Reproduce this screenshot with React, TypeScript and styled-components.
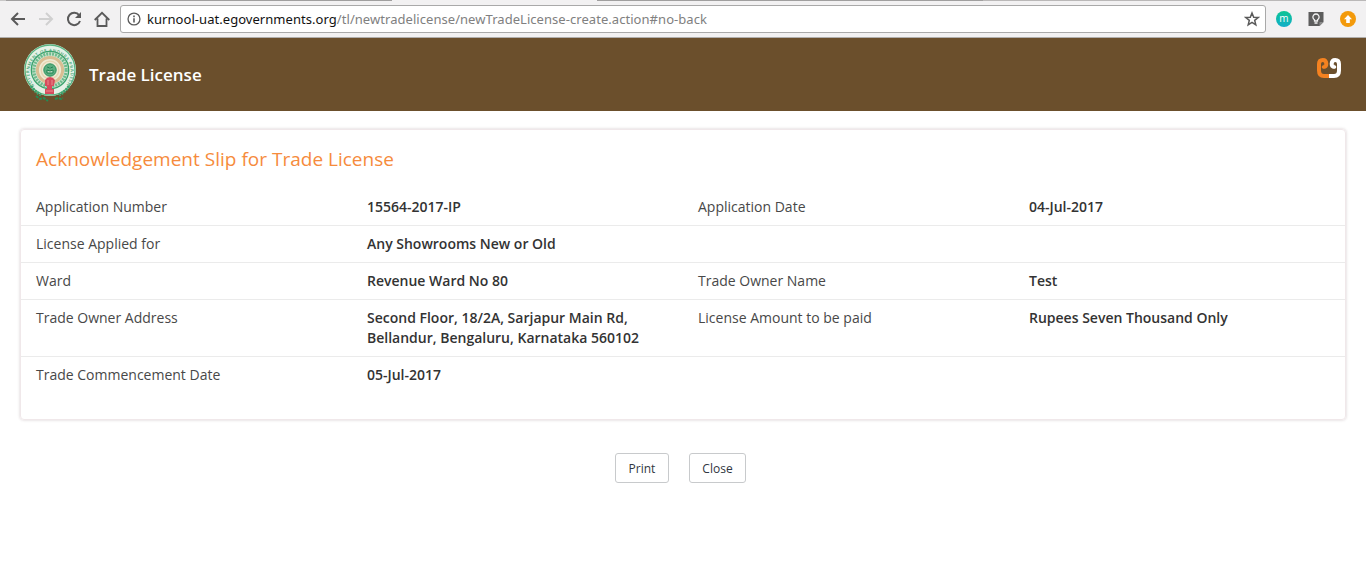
import React from 'react';
import styled, { createGlobalStyle } from 'styled-components';

const GlobalStyle = createGlobalStyle`
  * { box-sizing: border-box; }
  body { margin: 0; background: #fff; font-family: 'Open Sans', sans-serif; font-size: 14px; line-height: 20px; color: #303641; }
`;

const TabEdge = styled.div`
  display: flex;
  height: 1px;
  background: #a09f9f;
`;
const TabPart = styled.span<{ $w: number; $color: string }>`
  width: ${(p) => p.$w}px;
  background: ${(p) => p.$color};
`;
const BrowserBar = styled.div`
  display: flex;
  align-items: center;
  height: 37px;
  padding: 0 10px;
  background: #f2f1f2;
  border-bottom: 1px solid #b0aeac;
`;
const NavIcon = styled.svg<{ $disabled?: boolean }>`
  flex: none;
  width: 16px;
  height: 16px;
  margin-right: 12px;
  fill: none;
  stroke: ${(p) => (p.$disabled ? '#d0d0d0' : '#5a5a5a')};
  stroke-width: 2;
`;
const AddressBox = styled.div`
  display: flex;
  align-items: center;
  width: 1146px;
  height: 28px;
  margin-left: -2px;
  padding: 0 5px 0 6px;
  background: #fff;
  border: 1px solid #a9a9a9;
  border-radius: 3px;
`;
const Url = styled.span`
  flex: 1;
  margin-left: 6px;
  font: 13px/20px 'Noto Sans', sans-serif;
  letter-spacing: 0.05px;
  color: #808080;
  white-space: nowrap;
`;
const Host = styled.span`
  color: #111;
`;
const Extensions = styled.div`
  display: flex;
  align-items: center;
  gap: 16px;
  margin-left: 10px;
`;
const SmallIcon = styled.svg<{ $size?: number }>`
  flex: none;
  display: block;
  width: ${(p) => p.$size ?? 16}px;
  height: ${(p) => p.$size ?? 16}px;
`;

const Header = styled.header`
  display: flex;
  align-items: center;
  height: 73px;
  padding: 0 23px;
  background: #6b4f2c;
`;
const EmblemSvg = styled.svg`
  width: 54px;
  height: 60px;
  margin-top: -3px;
`;
const AppTitle = styled.h1`
  flex: 1;
  margin: 1px 0 0 12px;
  font-size: 17px;
  font-weight: 600;
  line-height: 22px;
  color: #fff;
`;
const BrandSvg = styled.svg`
  width: 26px;
  height: 22px;
  margin: -13px 1px 0 0;
`;

const Card = styled.section`
  height: 291px;
  margin: 18px 20px 0;
  border: 1px solid #f0e8ea;
  border-radius: 4px;
  box-shadow: 0 0 3px rgba(80, 40, 50, 0.24);
`;
const CardTitle = styled.h2`
  margin: 0;
  padding: 15px 15px 16px;
  font-size: 19px;
  font-weight: 400;
  letter-spacing: 0.01px;
  line-height: 28px;
  color: #f68b3c;
`;
const Row = styled.div`
  display: grid;
  grid-template-columns: repeat(4, 1fr);
  border-bottom: 1px solid #ebebeb;
  &:last-child { border-bottom: 0; }
`;
const Label = styled.div`
  padding: 8px 15px;
  color: #484848;
`;
const Value = styled.div`
  padding: 8px 15px;
  font-weight: 600;
  color: #333;
`;
const Actions = styled.div`
  display: flex;
  justify-content: center;
  gap: 20px;
  margin: 33px 5px 0 0;
`;
const Button = styled.button<{ $w: number }>`
  width: ${(p) => p.$w}px;
  height: 30px;
  padding: 2px 0 0;
  font: 12px/18px 'Open Sans', sans-serif;
  color: #303641;
  background: #fff;
  border: 1px solid #c8cacc;
  border-radius: 3px;
`;

const Emblem = () => (
  <EmblemSvg viewBox="0 0 54 60">
    <defs>
      <path id="ring" d="M11.5 43A20.6 20.6 0 1 1 42.5 43" />
    </defs>
    <circle cx="27" cy="27" r="26" fill="#e4f1e6" />
    <circle cx="27" cy="27" r="25" fill="none" stroke="#5bb583" strokeWidth="1.3" />
    <circle cx="27" cy="27" r="18.7" fill="#cfe6d2" stroke="#3ba26d" strokeWidth="1.3" />
    <circle cx="27" cy="27" r="16.2" fill="none" stroke="#6dbb8d" strokeWidth="3.2" strokeDasharray="2 1" />
    <text fontFamily="Open Sans, sans-serif" fontWeight="600" fontSize="4.4" fill="#48a574">
      <textPath href="#ring" textLength="92">GOVERNMENT OF ANDHRA PRADESH</textPath>
    </text>
    <circle cx="27" cy="27" r="12.6" fill="#eee9d2" stroke="#d9bd92" strokeWidth="3" />
    <circle cx="27" cy="27" r="8.8" fill="none" stroke="#e5d3b0" strokeWidth="1.3" />
    <circle cx="27" cy="27" r="6.2" fill="#5cae7f" stroke="#2c925f" />
    <path d="M24 27q3 2 6 0v3h-6zM24 24l3 1 3-1" fill="#b9dac0" stroke="#1f8353" />
    <path d="M8 43q4 6 10 9M46 43q-4 6-10 9" fill="none" stroke="#3ba26d" strokeWidth="3" strokeDasharray="2 1" />
    <path d="M22 37q2-3 5-3t5 3l-1 6h-2v3h2v5h-9v-5h2v-3h-2z" fill="#d64c5d" />
    <path d="M25 37v5M29 37v5M23 48h7" stroke="#e88b8e" />
    <path d="M13 53l4 3 4-1 4 3M32 56l3-1 3 1 2-1" fill="none" stroke="#258b55" strokeWidth="2" strokeDasharray="3 1" />
  </EmblemSvg>
);

const Brand = () => (
  <BrandSvg viewBox="0 0 26 22" fill="none" strokeLinecap="butt" strokeWidth="4">
    <path d="M7.5 9.8C9.8 9.8 10.4 8.5 10.3 6.7C10.2 4 8.8 3 6.8 3C4.1 3 3 4.8 3 7V13.5Q3 19 8 19H13" stroke="#f58220" />
    <circle cx="7.5" cy="10" r="1.8" fill="#f58220" />
    <path d="M18.5 9.8C16.2 9.8 15.6 8.5 15.7 6.7C15.8 4 17.2 3 19.2 3C21.9 3 23 4.8 23 7V13.5Q23 19 18 19H13" stroke="#fff" />
    <circle cx="18.5" cy="10" r="1.8" fill="#fff" />
  </BrandSvg>
);

type Field = [string, string];
const rows: Field[][] = [
  [['Application Number', '15564-2017-IP'], ['Application Date', '04-Jul-2017']],
  [['License Applied for', 'Any Showrooms New or Old']],
  [['Ward', 'Revenue Ward No 80'], ['Trade Owner Name', 'Test']],
  [
    ['Trade Owner Address', 'Second Floor, 18/2A, Sarjapur Main Rd, Bellandur, Bengaluru, Karnataka 560102'],
    ['License Amount to be paid', 'Rupees Seven Thousand Only'],
  ],
  [['Trade Commencement Date', '05-Jul-2017']],
];

export default function App() {
  return (
    <>
      <GlobalStyle />
      <TabEdge>
        <TabPart $w={6} $color="#c8c7c7" />
        <TabPart $w={386} $color="#a09f9f" />
        <TabPart $w={205} $color="#f2f1f2" />
        <TabPart $w={386} $color="#a09f9f" />
        <TabPart $w={383} $color="#bab8b8" />
      </TabEdge>
      <BrowserBar>
        <NavIcon viewBox="0 0 16 16"><path d="M15 8H2M8 2L2 8l6 6" /></NavIcon>
        <NavIcon viewBox="0 0 16 16" $disabled><path d="M1 8h13M8 2l6 6-6 6" /></NavIcon>
        <NavIcon viewBox="0 0 16 16">
          <path d="M13.2 4.3A6.2 6.2 0 1 0 14 10" />
          <path d="M15 1v6H9z" fill="#5a5a5a" stroke="none" />
        </NavIcon>
        <NavIcon viewBox="0 0 16 16"><path d="M.7 9L8 1.8 15.3 9M3.5 7.5V15h9V7.5" strokeWidth="1.8" /></NavIcon>
        <AddressBox>
          <SmallIcon viewBox="0 0 16 16" $size={14}>
            <circle cx="8" cy="8" r="6.8" fill="none" stroke="#5a5a5a" strokeWidth="1.5" />
            <path d="M8 4v2M8 7v5" stroke="#5a5a5a" strokeWidth="1.8" />
          </SmallIcon>
          <Url><Host>kurnool-uat.egovernments.org</Host>/tl/newtradelicense/newTradeLicense-create.action#no-back</Url>
          <SmallIcon viewBox="0 0 16 16">
            <path d="M8 2l1.7 4.2 4.5.3-3.5 2.9 1.1 4.4L8 11.4l-3.8 2.4 1.1-4.4-3.5-2.9 4.5-.3z" fill="none" stroke="#5a5a5a" strokeWidth="1.5" />
          </SmallIcon>
        </AddressBox>
        <Extensions>
          <SmallIcon viewBox="0 0 16 16">
            <defs><linearGradient id="teal" x2="0" y2="1"><stop stopColor="#0dc493" /><stop offset="1" stopColor="#12aec9" /></linearGradient></defs>
            <circle cx="8" cy="8" r="8" fill="url(#teal)" />
            <text x="8" y="11" textAnchor="middle" fontFamily="Open Sans, sans-serif" fontSize="10" fill="#fff">m</text>
          </SmallIcon>
          <SmallIcon viewBox="0 0 16 16">
            <path d="M.5 1h15v10l-4 4H.5z" fill="#5d5d5d" />
            <path d="M11.5 15v-4h4z" fill="#8c8c8c" />
            <path d="M6.5 10V8.8a3.1 3.1 0 1 1 3 0V10zM6.5 12h3" fill="none" stroke="#f4f4f4" strokeWidth="1.3" />
          </SmallIcon>
          <SmallIcon viewBox="0 0 16 16">
            <circle cx="8" cy="8" r="8" fill="#f39a0b" />
            <path d="M8 4l4 4.3H9.8V12H6.2V8.3H4z" fill="#fff" />
          </SmallIcon>
        </Extensions>
      </BrowserBar>
      <Header>
        <Emblem />
        <AppTitle>Trade License</AppTitle>
        <Brand />
      </Header>
      <main>
        <Card>
          <CardTitle>Acknowledgement Slip for Trade License</CardTitle>
          {rows.map((fields) => (
            <Row key={fields[0][0]}>
              {fields.map(([label, value]) => (
                <React.Fragment key={label}>
                  <Label>{label}</Label>
                  <Value>{value}</Value>
                </React.Fragment>
              ))}
            </Row>
          ))}
        </Card>
        <Actions>
          <Button type="button" $w={54}>Print</Button>
          <Button type="button" $w={57}>Close</Button>
        </Actions>
      </main>
    </>
  );
}
